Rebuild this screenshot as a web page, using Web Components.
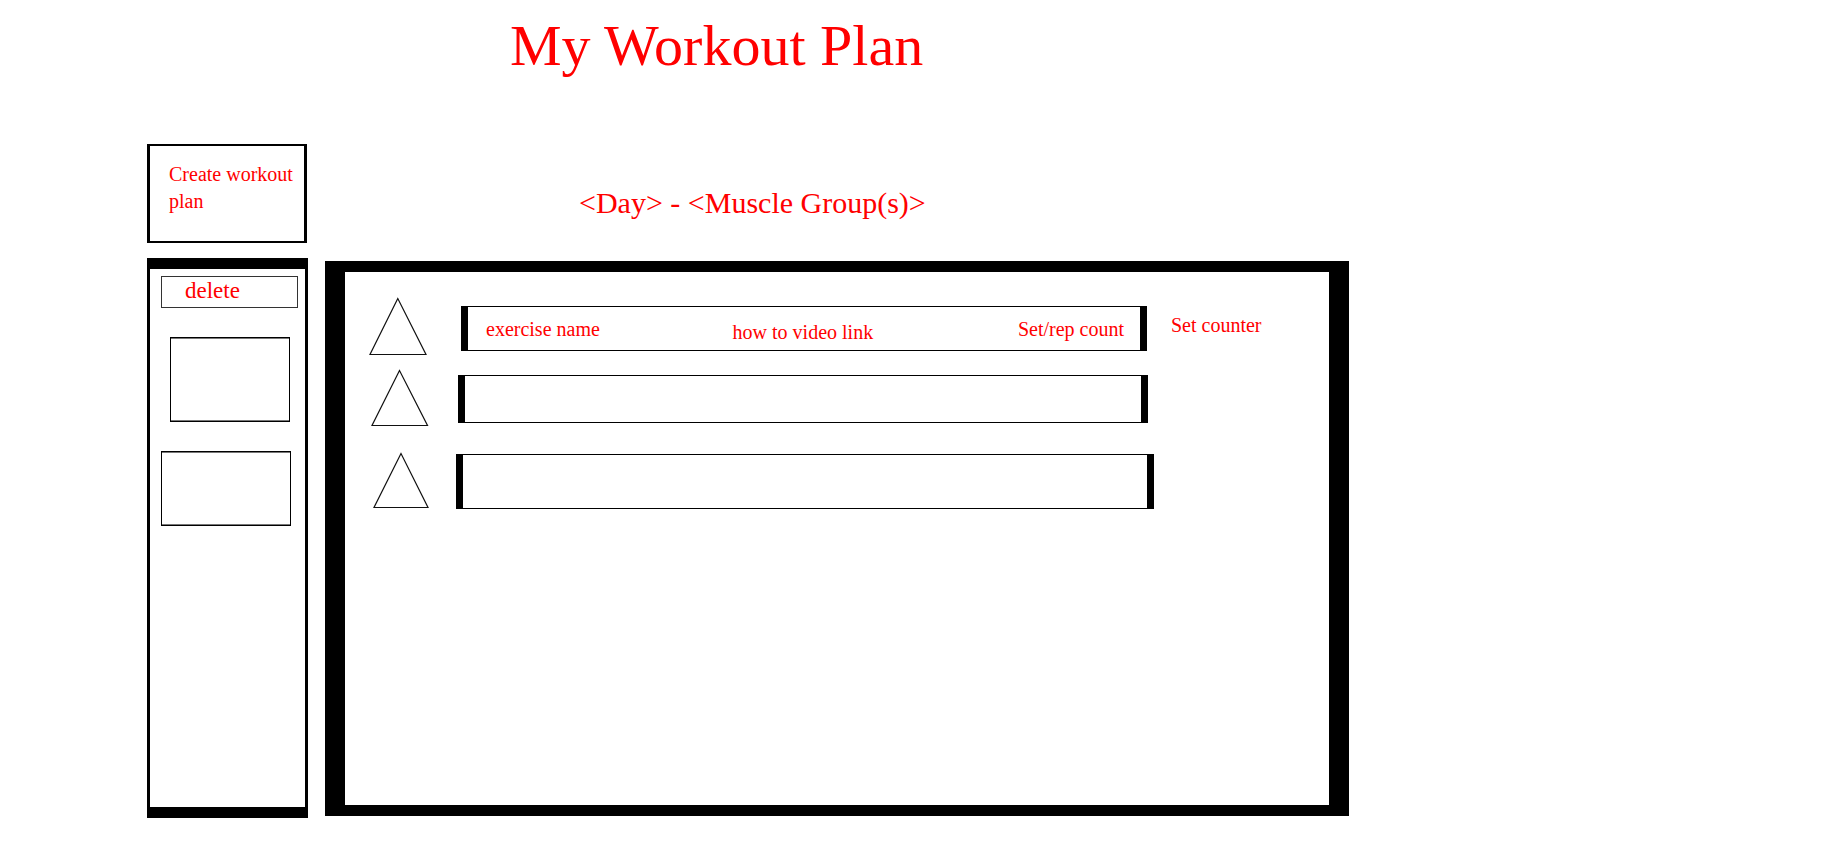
<!DOCTYPE html>
<html lang="en">
<head>
<meta charset="utf-8">
<title>My Workout Plan</title>
<style>
  body {
    margin: 0;
    background: #fff;
    color: #f00;
    font: 20px/23px "Liberation Serif", "Times New Roman", serif;
  }
</style>
</head>
<body>
<workout-app></workout-app>

<script>
const define = (name, html) => {
  const template = document.createElement('template');
  template.innerHTML = html;
  customElements.define(name, class extends HTMLElement {
    constructor() {
      super();
      this.attachShadow({ mode: 'open' }).append(template.content.cloneNode(true));
    }
  });
};

define('create-plan', `
  <style>
    :host { display: block; }
    button {
      box-sizing: border-box;
      display: flex;
      align-items: flex-start;
      width: 160px;
      min-height: 99px;
      margin: 0;
      padding: 15px 8px 13px 19px;
      border: solid #000;
      border-width: 2px 3px;
      border-radius: 0;
      background: none;
      color: inherit;
      font: inherit;
      line-height: 27px;
      text-align: left;
    }
  </style>
  <button type="button"><slot></slot></button>
`);

define('plan-list', `
  <style>
    :host {
      box-sizing: border-box;
      display: flex;
      flex-direction: column;
      flex: 1;
      padding: 7px 7px 7px 11px;
      border: solid #000;
      border-width: 11px 3px;
    }
    button {
      height: 32px;
      margin: 0;
      padding: 0 0 4px 23px;
      border: 1px solid #333;
      border-radius: 0;
      background: none;
      color: inherit;
      font: inherit;
      font-size: 23px;
      text-align: left;
    }
    ul { margin: 0; padding: 0; list-style: none; }
    li {
      box-sizing: border-box;
      border: 1px solid #000;
      box-shadow: inset 0 1px #777, inset 0 -1px #777;
    }
    li:nth-child(1) { width: 120px; height: 85px; margin: 29px 0 29px 9px; }
    li:nth-child(2) { width: 130px; height: 75px; }
  </style>
  <button type="button"><slot></slot></button>
  <ul><li></li><li></li></ul>
`);

define('exercise-row', `
  <style>
    :host {
      display: grid;
      grid-template-columns: var(--lead) 1fr var(--trail);
      align-items: center;
    }
    ::slotted(svg) {
      display: block;
      overflow: visible;
      fill: none;
      stroke: #111;
      stroke-width: 1.2;
    }
    .bar {
      box-sizing: border-box;
      display: flex;
      align-items: center;
      justify-content: space-between;
      height: var(--bar);
      padding: 2px 16px 0 18px;
      border: solid #000;
      border-width: 1px 7px;
    }
    .counter { padding: 0 0 6px 24px; }
  </style>
  <slot name="marker"></slot>
  <div class="bar"><slot></slot></div>
  <div class="counter"><slot name="counter"></slot></div>
`);

define('day-panel', `
  <style>
    :host {
      box-sizing: border-box;
      display: block;
      flex: 1;
      padding: 26px 0;
      border: solid #000;
      border-width: 11px 20px;
    }
  </style>
  <slot></slot>
`);

define('workout-app', `
  <style>
    :host {
      box-sizing: border-box;
      display: flex;
      flex-direction: column;
      min-height: 100vh;
      padding-bottom: 28px;
    }
    h1, h2 { margin: 0; font-weight: 400; }
    h1 { padding: 12px 0 0 510px; font-size: 58px; line-height: 68px; }
    h2 { padding: 41px 0 41px 254px; font-size: 30px; line-height: 35px; }
    .workspace {
      display: flex;
      flex: 1;
      gap: 17px;
      padding: 64px 488px 0 147px;
    }
    aside { display: flex; flex-direction: column; gap: 15px; width: 161px; }
    main {
      display: flex;
      flex-direction: column;
      flex: 1;
      padding-bottom: 2px;
    }
    exercise-row:nth-child(1) { --lead: 116px; --trail: 182px; --bar: 45px; }
    exercise-row:nth-child(2) { --lead: 113px; --trail: 181px; --bar: 48px; margin: 9px 0 21px; }
    exercise-row:nth-child(3) { --lead: 111px; --trail: 175px; --bar: 55px; }
    a { padding: 6px 12px 0 0; color: inherit; text-decoration: none; }
  </style>
  <header><h1>My Workout Plan</h1></header>
  <div class="workspace">
    <aside>
      <create-plan>Create workout plan</create-plan>
      <plan-list>delete</plan-list>
    </aside>
    <main>
      <h2>&lt;Day&gt; - &lt;Muscle Group(s)&gt;</h2>
      <day-panel>
        <exercise-row>
          <svg slot="marker" width="100" height="61" aria-hidden="true"><path d="M52.8 .5 25 56.5h56z"/></svg>
          <span>exercise name</span>
          <a href="#video">how to video link</a>
          <span>Set/rep count</span>
          <span slot="counter">Set counter</span>
        </exercise-row>
        <exercise-row>
          <svg slot="marker" width="100" height="62" aria-hidden="true"><path d="M54.5 2.5 27 57.5h55.5z"/></svg>
        </exercise-row>
        <exercise-row>
          <svg slot="marker" width="100" height="61" aria-hidden="true"><path d="M56 2.5 29 56.500h54z"/></svg>
        </exercise-row>
      </day-panel>
    </main>
  </div>
`);
</script>
</body>
</html>
